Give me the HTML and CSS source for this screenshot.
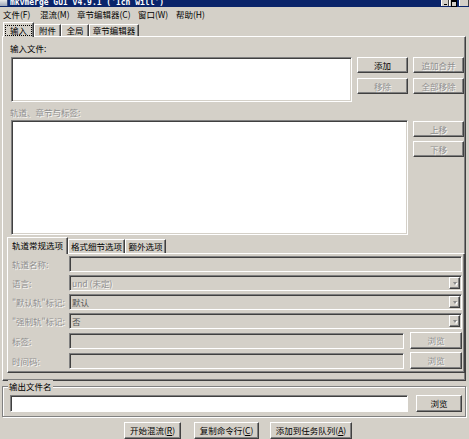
FILE: index.html
```html
<!DOCTYPE html>
<html lang="zh-CN">
<head>
<meta charset="utf-8">
<title>mkvmerge GUI</title>
<link rel="stylesheet" href="styles.css">
</head>
<body>
<div class="titlebar">
  <span class="app-icon"></span>
  <span class="title-text">mkvmerge GUI v4.9.1 ('Ich will')</span>
  <div class="caption-btns">
    <span class="cap cap-min"></span><span class="cap cap-max"></span><span class="cap cap-close"></span>
  </div>
</div>
<div class="menubar">
  <span class="menu-item m1">文件(F)</span>
  <span class="menu-item m2">混流(M)</span>
  <span class="menu-item m3">章节编辑器(C)</span>
  <span class="menu-item m4">窗口(W)</span>
  <span class="menu-item m5">帮助(H)</span>
</div>
<div class="tabstrip">
  <span class="tab active t1"><span class="focus">输入</span></span>
  <span class="tab t2">附件</span>
  <span class="tab t3">全局</span>
  <span class="tab t4">章节编辑器</span>
</div>
<div class="panel">
  <div class="lbl lbl-files">输入文件:</div>
  <div class="row row-files">
    <div class="listbox lb-files"></div>
    <div class="btngrid">
      <span class="btn">添加</span>
      <span class="btn dis">追加合并</span>
      <span class="btn dis">移除</span>
      <span class="btn dis">全部移除</span>
    </div>
  </div>
  <div class="lbl lbl-tracks dis">轨道、章节与标签:</div>
  <div class="row row-tracks">
    <div class="listbox lb-tracks"></div>
    <div class="btncol">
      <span class="btn dis">上移</span>
      <span class="btn dis">下移</span>
    </div>
  </div>
  <div class="subtabs">
    <span class="tab active s1">轨道常规选项</span>
    <span class="tab s2">格式细节选项</span>
    <span class="tab s3">额外选项</span>
  </div>
  <div class="subpanel">
    <div class="frow">
      <span class="flabel dis">轨道名称:</span>
      <span class="field"></span>
    </div>
    <div class="frow">
      <span class="flabel dis">语言:</span>
      <span class="field combo"><span class="ftext dis">und (未定)</span><span class="dd"><span class="arrow"></span></span></span>
    </div>
    <div class="frow">
      <span class="flabel dis">"默认轨"标记:</span>
      <span class="field combo"><span class="ftext mid">默认</span><span class="dd"><span class="arrow"></span></span></span>
    </div>
    <div class="frow">
      <span class="flabel dis">"强制轨"标记:</span>
      <span class="field combo"><span class="ftext mid">否</span><span class="dd"><span class="arrow"></span></span></span>
    </div>
    <div class="frow tall">
      <span class="flabel dis">标签:</span>
      <span class="field short"></span>
      <span class="btn dis browse">浏览</span>
    </div>
    <div class="frow tall">
      <span class="flabel dis">时间码:</span>
      <span class="field short"></span>
      <span class="btn dis browse">浏览</span>
    </div>
  </div>
</div>
<fieldset class="outgroup">
  <legend>输出文件名</legend>
  <div class="outrow">
    <span class="field white outfield"></span>
    <span class="btn outbrowse">浏览</span>
  </div>
</fieldset>
<div class="actions">
  <span class="btn a1">开始混流(<u>R</u>)</span>
  <span class="btn a2">复制命令行(<u>C</u>)</span>
  <span class="btn a3">添加到任务队列(<u>A</u>)</span>
</div>
</body>
</html>
```
FILE: styles.css
```css
* { box-sizing: border-box; }
html, body { margin: 0; padding: 0; }
body {
  width: 469px;
  height: 439px;
  overflow: hidden;
  background: #d4d0c8;
  font-family: "Noto Sans CJK SC", "Noto Sans", sans-serif;
  font-size: 8.5px;
  color: #000;
}
.dis { color: #8f8f8f; text-shadow: 1px 1px 0 rgba(255,255,255,0.85); }
.mid { color: #555; }

/* title bar */
.titlebar {
  height: 7px;
  background: #0a246a;
  display: flex;
  align-items: flex-end;
  overflow: hidden;
}
.app-icon {
  width: 8px;
  height: 6px;
  align-self: flex-start;
  margin-right: 2px;
  background: linear-gradient(#e8e8e8, #9aa4b8);
  border-right: 1px solid #3a4a7a;
}
.title-text {
  font-family: "DejaVu Sans Mono", monospace;
  font-weight: bold;
  font-size: 8px;
  line-height: 8px;
  color: #fff;
  white-space: pre;
}
.caption-btns {
  margin-left: auto;
  align-self: flex-start;
  display: flex;
  height: 6px;
}
.cap {
  width: 8px;
  height: 6px;
  background: #d4d0c8;
  border-left: 1px solid #fff;
  border-right: 1px solid #404040;
  position: relative;
}
.cap-close { margin-left: 2px; width: 10px; }
.cap-min::after {
  content: ""; position: absolute; left: 2px; bottom: 1px; width: 3px; height: 1px; background: #000;
}
.cap-max::after {
  content: ""; position: absolute; left: 1px; top: 0; width: 4px; height: 4px; border: 1px solid #000; border-top-width: 2px;
}

/* menu */
.menubar {
  height: 15px;
  display: flex;
  padding-left: 3px;
  line-height: 15px;
}
.m1, .m2 { width: 37px; }
.m3 { width: 61px; }
.m4 { width: 38px; }

/* tabs */
.tabstrip {
  height: 14px;
  display: flex;
  align-items: flex-end;
  padding-left: 3px;
}
.tab {
  height: 12px;
  line-height: 11px;
  text-align: center;
  border-top: 1px solid #fff;
  border-left: 1px solid #fff;
  border-right: 1px solid #404040;
  box-shadow: inset -1px 0 0 #808080;
  background: #d4d0c8;
  white-space: nowrap;
}
.tab.active {
  height: 15px;
  margin-bottom: -1px;
  position: relative;
  z-index: 1;
  line-height: 13px;
}
.t1 { width: 31px; padding-top: 1px; }
.t2 { width: 27px; }
.t3 { width: 28px; }
.t4 { width: 50px; }
.focus {
  display: inline-block;
  width: 27px;
  height: 11px;
  line-height: 10px;
  outline: 1px dotted #000;
  outline-offset: -1px;
}

/* main panel */
.panel {
  margin-left: 2px;
  width: 464px;
  height: 345px;
  border-top: 1px solid #fff;
  border-left: 1px solid #fff;
  border-right: 1px solid #404040;
  border-bottom: 1px solid #404040;
  box-shadow: inset -1px -1px 0 #808080;
}
.lbl { line-height: 12px; margin-left: 7px; }
.lbl-files { margin-top: 5px; }
.lbl-tracks { margin-top: 4px; }
.row { display: flex; margin-left: 8px; }
.row-files { margin-top: 3px; }
.row-tracks { margin-top: 2px; }

.listbox {
  background: #fff;
  border: 1px solid;
  border-color: #808080 #fff #fff #808080;
  box-shadow: inset 1px 1px 0 #404040, inset -1px -1px 0 #d4d0c8;
}
.lb-files { width: 341px; height: 45px; }
.lb-tracks { width: 397px; height: 115px; }

.btn {
  display: block;
  height: 16px;
  line-height: 14px;
  text-align: center;
  background: #d4d0c8;
  border: 1px solid;
  border-color: #fff #404040 #404040 #fff;
  box-shadow: inset -1px -1px 0 #808080;
  white-space: nowrap;
}
.btngrid {
  margin-left: 5px;
  display: grid;
  grid-template-columns: 51px 51px;
  grid-auto-rows: 16px;
  column-gap: 5px;
  row-gap: 5px;
}
.btncol {
  margin-left: 5px;
  margin-top: 1px;
  display: flex;
  flex-direction: column;
  gap: 4px;
  width: 51px;
}

/* sub tabs */
.subtabs {
  height: 16px;
  margin: 2px 0 0 4px;
  display: flex;
  align-items: flex-end;
}
.subtabs .tab { height: 14px; line-height: 13px; }
.subtabs .tab.active { height: 17px; line-height: 15px; }
.s1 { width: 61px; }
.s2 { width: 57px; }
.s3 { width: 41px; }

.subpanel {
  margin-left: 4px;
  width: 458px;
  height: 120px;
  padding: 2px 2px 3px 4px;
  border-top: 1px solid #fff;
  border-left: 1px solid #fff;
  border-right: 1px solid #404040;
  border-bottom: 1px solid #404040;
  box-shadow: inset -1px -1px 0 #808080;
}
.frow {
  display: flex;
  align-items: center;
  height: 16px;
  margin-bottom: 3px;
}
.frow.tall { height: 17px; }
.frow:last-child { margin-bottom: 0; }
.flabel { width: 57px; white-space: nowrap; }
.field {
  display: flex;
  align-items: center;
  flex: 1;
  height: 16px;
  background: #d4d0c8;
  border: 1px solid;
  border-color: #808080 #fff #fff #808080;
  box-shadow: inset 1px 1px 0 #404040;
}
.field.white { background: #fff; }
.field.short { flex: none; width: 335px; margin-right: 6px; }
.tall .field.short { height: 16px; }
.ftext { flex: 1; padding-left: 2px; line-height: 14px; }
.dd {
  width: 11px;
  height: 12px;
  margin-right: 1px;
  background: #d4d0c8;
  border: 1px solid;
  border-color: #fff #404040 #404040 #fff;
  box-shadow: inset -1px -1px 0 #808080;
  display: flex;
  align-items: center;
  justify-content: center;
}
.arrow {
  width: 0;
  height: 0;
  border-left: 2.5px solid transparent;
  border-right: 2.5px solid transparent;
  border-top: 3px solid #8a8a8a;
  filter: drop-shadow(1px 1px 0 #fff);
}
.browse { width: 52px; height: 17px; line-height: 15px; }

/* output group */
.outgroup {
  margin: -1px 0 0 2px;
  width: 464px;
  padding: 3px 3px 4px 7px;
  border: 1px solid #808080;
  box-shadow: inset 1px 1px 0 #fff, 1px 1px 0 #fff;
  min-width: 0;
}
.outgroup legend {
  padding: 0 1px;
  margin-left: -2px;
  line-height: 12px;
  background: #d4d0c8;
}
.outrow { display: flex; }
.outfield { flex: none; width: 398px; height: 17px; }
.outbrowse { width: 46px; height: 17px; line-height: 15px; margin-left: 8px; }

/* bottom actions */
.actions {
  display: flex;
  margin-top: 5px;
  padding-left: 124px;
}
.actions .btn { height: 17px; line-height: 15px; }
.a1 { width: 57px; }
.a2 { width: 65px; margin-left: 13px; }
.a3 { width: 82px; margin-left: 11px; }
u { text-decoration: underline; text-underline-offset: 1px; }
```
